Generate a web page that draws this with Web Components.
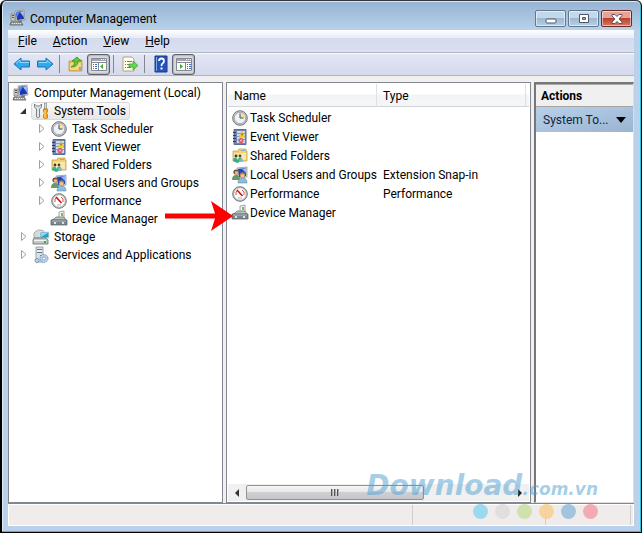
<!DOCTYPE html>
<html lang="en">
<head>
<meta charset="utf-8">
<title>Computer Management</title>
<style>
	body {
		margin: 0;
		font: 12px/18px Roboto, "Open Sans", sans-serif;
		color: #000;
	}
</style>
</head>
<body>
<mmc-window></mmc-window>

<script>
const icons = {
	computer: `
		<path d="M5 1l9-1 1 10-9 1z" fill="#d9d9d0" stroke="#8b8b85" stroke-width=".7"/>
		<path d="M6 2l7-1 1 8-7 1z" fill="#1739b5"/><path d="M6 2l4-.5L7 7z" fill="#5f85e8"/>
		<path d="M10 2l3-.7.8 6z" fill="#a9c6f7"/>
		<path d="M1 4h4v7H1z" fill="#c9c9c2" stroke="#777" stroke-width=".7"/><path d="M2 5.500h2M2 7.500h2" stroke="#555"/>
		<path d="M8 10h4v2H8z" fill="#888"/>
		<path d="M1 12h10l2 3H0z" fill="#a5aaa9" stroke="#555d5e" stroke-width=".8"/><path d="M2 13.500h9" stroke="#e8e8e8" stroke-dasharray="1 1"/>`,
	tools: `
		<path d="M1.500 1v3l2 2v8q1.500 2 3 0V6l2-2V1L6.500 3h-3z" fill="#e2e4e6" stroke="#71777b" stroke-width=".9"/>
		<path d="M11.500 0h2v6h-2z" fill="#ddd" stroke="#777" stroke-width=".6"/>
		<path d="M10.500 6h4v3l-1 1 1 2v3q-2 1-4 0v-3l1-2-1-1z" fill="#f2a51c" stroke="#b87008" stroke-width=".7"/><path d="M12 7v8" stroke="#ffdb74"/>`,
	clock: `
		<circle cx="8" cy="8" r="7.300" fill="#c3c5c7" stroke="#74777a"/>
		<circle cx="8" cy="8" r="5.600" fill="#eef3f9" stroke="#8b9096" stroke-width=".6"/>
		<path d="M8 8V2.700A5.300 5.300 0 0 1 13.300 8z" fill="#f8dca4"/>
		<path d="M8 3.500V8h3.500" fill="none" stroke="#3e5068"/>`,
	event: `
		<path d="M2 .5h12v15H2z" fill="#7187ae" stroke="#566d99"/><path d="M5 2h8v12H5z" fill="#c9dcf7"/>
		<path d="M5 4.500h8M5 7.500h8M5 10.500h8" stroke="#7fa0d8"/>
		<path d="M1 3.500h3M1 6.500h3M1 9.500h3M1 12.500h3" stroke="#333e54"/>
		<path d="M10 2.500L13 8H7z" fill="#ffd92e" stroke="#d0ac14" stroke-width=".6"/><path d="M10 4.500v2" stroke="#222" stroke-width=".8"/>
		<circle cx="9" cy="11.500" r="2.500" fill="#e0474b"/><path d="M8 10.500l2 2m0-2l-2 2" stroke="#fff" stroke-width=".8"/>`,
	folder: `
		<path d="M1 3h5l1-2h7v2h1v10H1z" fill="#f2d173" stroke="#c8a347" stroke-width=".8"/>
		<path d="M2 5h12v7H2z" fill="#f9e8ae"/><path d="M9 2.500h4" stroke="#6fb5e6"/>
		<circle cx="4" cy="8" r="1.400" fill="#4b352a"/><circle cx="8" cy="8" r="1.400" fill="#63412f"/>
		<path d="M1 13q0-3.500 3-3.500L6 12q0-2.500 2-2.500 2.500 0 2.500 3.500L5 15z" fill="#38b086"/><path d="M7 14q0-3.500 2-3.500 2 0 2 3z" fill="#78b9d5"/>`,
	users: `
		<path d="M5 1l10-1v10l-9 1z" fill="#d4d7d8" stroke="#8a8e91" stroke-width=".7"/><path d="M6 2l8-1v8l-7 1z" fill="#2145c1"/><path d="M10 2l4-1v5z" fill="#92b7ff"/>
		<circle cx="4" cy="5" r="2.600" fill="#70502e"/><circle cx="4.500" cy="5.800" r="1.800" fill="#e4b583"/>
		<path d="M0 13q0-5 4-5t4 5z" fill="#68976d"/>
		<circle cx="10.500" cy="8" r="2.700" fill="#b5833c"/><circle cx="10.500" cy="8.800" r="1.900" fill="#f0c697"/>
		<path d="M6 16q0-5 4.500-5t4.500 5z" fill="#8dbddb" stroke="#527d9b" stroke-width=".5"/>`,
	perf: `
		<circle cx="8" cy="8" r="7.300" fill="#c2c5c4" stroke="#747978"/><circle cx="8" cy="8" r="5.700" fill="#fff"/>
		<path d="M4 9V6l2-2M12 9V6l-2-2" fill="none" stroke="#d0524d"/>
		<path d="M5 4l5.500 6" stroke="#d61418" stroke-width="1.700"/><path d="M6 12h4" stroke="#aaa"/>`,
	device: `
		<path d="M8 1l5-1v8H8z" fill="#f5f6f4" stroke="#8a9190" stroke-width=".8"/><path d="M10 2h2v3h-2z" fill="#7ebb55"/>
		<path d="M3 8l2-2h8l2 3H1z" fill="#bcc2c4" stroke="#656d70" stroke-width=".7"/>
		<path d="M0 9h16v5H0z" fill="#7c878c" stroke="#515b60" stroke-width=".7"/><path d="M1 10h14" stroke="#b4bdc0"/>
		<path d="M3 11h2v2H3zm8 0h2v2h-2z" fill="#dfe3e1"/>`,
	storage: `
		<path d="M1 4q4-5 10-2l-1 7H1z" fill="#d5dadb" stroke="#8d9597" stroke-width=".7"/>
		<path d="M7 3h9v6H7z" fill="#299bcb" stroke="#d2e7ed"/><path d="M8 4h7L8 8z" fill="#8ed7ee"/>
		<path d="M1 9h12l2 2v4H0v-4z" fill="#c4c9ca" stroke="#606b6d" stroke-width=".8"/><path d="M1 11.500h12" stroke="#f3f5f5"/><path d="M11 12h2v2h-2z" fill="#2cb62d"/>`,
	services: `
		<path d="M3 0h7v15H3z" fill="#dce1e5" stroke="#889198" stroke-width=".8"/><path d="M4 2.500h5M4 5.500h5" stroke="#657785"/><path d="M4 4h5" stroke="#fff"/><path d="M7 8h2v1H7z" fill="#3eac50"/>
		<circle cx="11" cy="11.500" r="4" fill="#b9d0e6" stroke="#6e93b5" stroke-dasharray="1.500 1"/><circle cx="11" cy="11.500" r="1.500" fill="#fff" stroke="#6e93b5" stroke-width=".7"/>
		<circle cx="4" cy="13.500" r="2" fill="#c6d5e2" stroke="#7893aa"/>`,
	back: `<path d="M0 8l7-6v3h8.500v6H7v3z" fill="#31a9ec" stroke="#1875b5"/><path d="M2 7.500L6 4v2.500h9" fill="none" stroke="#8ad9ff"/>`,
	forward: `<path d="M16 8L9 2v3H.5v6H9v3z" fill="#31a9ec" stroke="#1875b5"/><path d="M1.500 6.500H10V4.500l3.500 3" fill="none" stroke="#8ad9ff"/>`,
	up: `
		<path d="M1 5h6l1-1h6v11H1z" fill="#e7bd5b" stroke="#b88d36" stroke-width=".7"/><path d="M2 7h11v7H2z" fill="#f4d681"/><path d="M11 11h2v3h-2z" fill="#75aad7"/>
		<path d="M3 11q4-1 4-6H4l5-4 4 4h-3q0 6-7 6z" fill="#62c934" stroke="#278a1b" stroke-width=".7"/>`,
	export: `
		<path d="M1 1h9l2 2v12H1z" fill="#fffceb" stroke="#b1a77d"/><path d="M3 5.500h1m1 0h5M3 8.500h1m1 0h5M3 11.500h1m1 0h4" stroke="#756f99"/>
		<path d="M7 8h4V5l5 4.500-5 4.500v-3H7z" fill="#6bd64b" stroke="#349f2d" stroke-width=".7"/>`,
	help: `
		<path d="M2 0h12v16H2z" fill="#2452ba" stroke="#193a8b"/><path d="M3 1h1v14H3z" fill="#7fa3ec"/>
		<path d="M6 5q0-2.500 2.500-2.500T11 5q0 1.500-1.500 2.500Q8.500 8 8.500 10" fill="none" stroke="#fff" stroke-width="1.800"/><path d="M7.500 11.500h2v2h-2z" fill="#fff"/>`,
	treepane: `
		<path d="M.5 2.500h15v12H.5z" fill="#fff" stroke="#858891"/><path d="M1 3h14v2H1z" fill="#a4a7b1"/><path d="M10 3.500h1m1 0h1m1 0h1" stroke="#fff"/><path d="M1 6.500h14" stroke="#858891"/>
		<path d="M7.500 7v7" stroke="#858891"/><path d="M2 8.500h1m1 0h2m-4 2h1m1 0h2m-4 2h1m1 0h2" stroke="#3e70b0"/><path d="M12 8v5l-3-2.500z" fill="#3cad32"/>`,
	actpane: `
		<path d="M.5 2.500h15v12H.5z" fill="#fff" stroke="#858891"/><path d="M1 3h14v2H1z" fill="#a4a7b1"/><path d="M10 3.500h1m1 0h1m1 0h1" stroke="#fff"/><path d="M1 6.500h14" stroke="#858891"/>
		<path d="M9.500 7v7" stroke="#858891"/><path d="M11 8.500h1m1 0h2m-4 2h1m1 0h2m-4 2h1m1 0h2" stroke="#3e70b0"/><path d="M4 8v5l3-2.500z" fill="#3cad32"/>`
};

class SysIcon extends HTMLElement {
	connectedCallback() {
		this.attachShadow({ mode: 'open' }).innerHTML = `
		<style>
			:host { display: block; flex: none; width: 16px; height: 16px; }
			svg { display: block; overflow: visible; }
		</style>
		<svg width="16" height="16" viewBox="0 0 16 16" aria-hidden="true">${icons[this.getAttribute('name')]}</svg>`;
	}
}

class TitleBar extends HTMLElement {
	connectedCallback() {
		this.attachShadow({ mode: 'open' }).innerHTML = `
		<style>
			:host { display: flex; height: 30px; gap: 4px; padding-left: 2px; box-sizing: border-box; }
			sys-icon { margin-top: 10px; }
			h1 { flex: 1; margin: 10px 0 0; font-size: 12px; font-weight: normal; line-height: 18px; }
			div { display: flex; gap: 2px; margin: 10px 2px 0 0; }
			button {
				width: 31px; height: 17px; padding: 0; display: grid; place-items: center;
				border: 1px solid #62788f; border-radius: 2px; box-shadow: inset 0 0 0 1px #ffffff88;
				background: linear-gradient(#c4d8eb 48%, #9db8d2 50%, #b8d0e8);
			}
			.close { border-color: #6a2927; background: linear-gradient(#e5a496 45%, #bd3e2b 50%, #d57b62); }
		</style>
		<sys-icon name="computer"></sys-icon>
		<h1><slot></slot></h1>
		<div>
			<button aria-label="Minimize"><svg width="12" height="10"><rect x="1" y="5" width="10" height="4" rx="1" fill="#fff" stroke="#535666"/></svg></button>
			<button aria-label="Maximize"><svg width="12" height="10"><path d="M1.500.5h9v8h-9zM4.500 3.500v2h3v-2z" fill="#fff" fill-rule="evenodd" stroke="#535666"/></svg></button>
			<button class="close" aria-label="Close"><svg width="12" height="10"><path d="M1 .5h3l2 2 2-2h3v1L8 5l3 3v1.500H8L6 7.500l-2 2H1V8l3-3-3-3z" fill="#fff" stroke="#535666"/></svg></button>
		</div>`;
	}
}

class MenuBar extends HTMLElement {
	connectedCallback() {
		const items = this.getAttribute('items').split(' ');
		this.attachShadow({ mode: 'open' }).innerHTML = `
		<style>
			:host {
				display: flex; gap: 16px; height: 22px; padding-left: 10px;
				background: linear-gradient(#fff, #e6ebf6 36%, #d4dbed 38%, #d9e0f2);
				border-bottom: 1px solid #b4b6c2;
			}
			button { border: 0; padding: 0; background: none; font: inherit; line-height: 22px; }
		</style>
		${items.map(item => `<button><u>${item[0]}</u>${item.slice(1)}</button>`).join('')}`;
	}
}

class ToolBar extends HTMLElement {
	connectedCallback() {
		this.attachShadow({ mode: 'open' }).innerHTML = `
		<style>
			:host {
				display: flex; align-items: center; height: 22px; padding-left: 2px;
				background: linear-gradient(#fff, #e1e5f4 8%, #d5d9ec);
				border-bottom: 1px solid #b1b2bc;
			}
			button {
				display: grid; place-items: center; width: 23px; height: 21px; padding: 0;
				border: 1px solid transparent; border-radius: 3px; background: none; box-sizing: border-box;
			}
			.on { border-color: #5f616b; background: #d8dbe4; box-shadow: inset 0 0 2px #666; }
			hr { width: 1px; height: 18px; margin: 0 4px 0 3px; border: 0; background: #86868e; }
		</style>
		<button aria-label="Back"><sys-icon name="back"></sys-icon></button>
		<button aria-label="Forward"><sys-icon name="forward"></sys-icon></button>
		<hr>
		<button aria-label="Up"><sys-icon name="up"></sys-icon></button>
		<button class="on" aria-label="Console tree"><sys-icon name="treepane"></sys-icon></button>
		<hr>
		<button aria-label="Export list"><sys-icon name="export"></sys-icon></button>
		<hr>
		<button aria-label="Help"><sys-icon name="help"></sys-icon></button>
		<button class="on" aria-label="Action pane"><sys-icon name="actpane"></sys-icon></button>`;
	}
}

class TreeItem extends HTMLElement {
	connectedCallback() {
		const state = this.getAttribute('state');
		const arrow = {
			open: '<path d="M7 3v6H1z" fill="#333"/>',
			closed: '<path d="M2.500 1.500v8L7 5.500z" fill="#fff" stroke="#a0a0a0"/>'
		}[state] || '';
		this.attachShadow({ mode: 'open' }).innerHTML = `
		<style>
			:host { display: flex; align-items: center; height: 18px; }
			:host([level="1"]) { padding-left: 8px; }
			:host([level="2"]) { padding-left: 26px; }
			:host([level="0"]) .arrow { display: none; }
			.arrow { flex: none; width: 12px; height: 12px; }
			button {
				display: flex; align-items: center; gap: 5px; height: 18px; padding: 0 3px 0 1px; box-sizing: border-box;
				border: 1px solid transparent; border-radius: 3px; background: none; font: inherit; white-space: nowrap;
			}
			:host([selected]) button { border-color: #d9d9d9; background: linear-gradient(#fafafa, #e6e6e6); }
		</style>
		<svg class="arrow" viewBox="0 0 12 12" aria-hidden="true">${arrow}</svg>
		<button><sys-icon name="${this.getAttribute('icon')}"></sys-icon><slot></slot></button>`;
	}
}

class ListView extends HTMLElement {
	connectedCallback() {
		const rows = [
			['clock', 'Task Scheduler', ''],
			['event', 'Event Viewer', ''],
			['folder', 'Shared Folders', ''],
			['users', 'Local Users and Groups', 'Extension Snap-in'],
			['perf', 'Performance', 'Performance'],
			['device', 'Device Manager', '']
		];
		this.attachShadow({ mode: 'open' }).innerHTML = `
		<style>
			:host { display: flex; flex-direction: column; justify-content: space-between; padding: 1px; }
			table { width: 100%; border-collapse: separate; border-spacing: 0; table-layout: fixed; }
			th {
				height: 23px; padding: 2px 6px 0; box-sizing: border-box; text-align: left; font-weight: normal;
				background: linear-gradient(#fff 45%, #f3f4f6 50%, #f5f6f8);
				border-bottom: 1px solid #d2d4d6; border-right: 1px solid #dfe0e2;
			}
			th:last-child { border-right: 0; width: 3px; padding: 0; }
			td { height: 19px; padding: 0 6px; white-space: nowrap; }
			tbody::before { content: ""; display: table-row; height: 1px; }
			td:first-child { padding: 0 0 0 4px; }
			.name { display: flex; align-items: center; gap: 2px; }
			td:last-child { padding: 0; }
		</style>
		<table>
			<thead><tr><th>Name</th><th>Type</th><th></th></tr></thead>
			<tbody>
			${rows.map(([icon, name, type]) => `
				<tr><td><div class="name"><sys-icon name="${icon}"></sys-icon>${name}</div></td><td>${type}</td><td></td></tr>`).join('')}
			</tbody>
		</table>
		<scroll-bar></scroll-bar>`;
	}
}

class ScrollBar extends HTMLElement {
	connectedCallback() {
		this.attachShadow({ mode: 'open' }).innerHTML = `
		<style>
			:host { display: grid; grid-template-columns: 18px 1fr 18px; height: 17px; background: #f0f0f0; }
			button { display: grid; place-items: center; border: 0; padding: 0; background: none; }
			.thumb {
				width: 67%; height: 15px; margin-top: 1px; box-sizing: border-box;
				border: 1px solid #929292; border-radius: 2px;
				background: linear-gradient(#f6f6f6, #e8e8ea 45%, #cfcfd4 50%, #c5c5ca);
			}
		</style>
		<button aria-label="Scroll left"><svg width="8" height="8"><path d="M6 0v8L2 4z" fill="#333"/></svg></button>
		<div><button class="thumb" aria-label="Scroll thumb"><svg width="9" height="7"><path d="M1.500 0v7M4.500 0v7M7.500 0v7" stroke="#555"/><path d="M2.500 0v7M5.500 0v7M8.500 0v7" stroke="#aaa"/></svg></button></div>
		<button aria-label="Scroll right"><svg width="8" height="8"><path d="M2 0v8l4-4z" fill="#222"/></svg></button>`;
	}
}

class ActionPane extends HTMLElement {
	connectedCallback() {
		this.attachShadow({ mode: 'open' }).innerHTML = `
		<style>
			:host { display: block; }
			h2 {
				margin: 0; height: 20px; padding: 1px 5px 0; font-size: 12px; line-height: 20px;
				background: #f0f0f0; border-top: 1px solid #aaa; border-bottom: 1px solid #a5a5a5;
			}
			button {
				display: flex; align-items: center; justify-content: space-between; width: 100%; height: 25px;
				padding: 0 7px; border: 0; font: inherit; color: #14233c; white-space: nowrap;
				background: linear-gradient(165deg, #b9d1ea, #99b4d1);
			}
		</style>
		<h2>Actions</h2>
		<button><span><slot></slot></span><svg width="10" height="6" aria-hidden="true"><path d="M0 0h10L5 6z"/></svg></button>`;
	}
}

class StatusBar extends HTMLElement {
	connectedCallback() {
		this.attachShadow({ mode: 'open' }).innerHTML = `
		<style>
			:host {
				display: grid; grid-template-columns: 1fr 133px 85px 2px; height: 20px;
				background: #f0eceb; border: 1px solid #fff;
			}
			span { border-right: 1px solid #d2cecd; }
			span:last-child { border: 0; }
		</style>
		<span></span><span></span><span></span><span></span>`;
	}
}

class SiteMark extends HTMLElement {
	connectedCallback() {
		const dots = ['#8fd5f0', '#dfdadd', '#c9dfa5', '#f8d08f', '#94bddc', '#f2a0a6'];
		this.attachShadow({ mode: 'open' }).innerHTML = `
		<style>
			:host {
				display: flex; flex-direction: column; align-items: flex-end; pointer-events: none;
				font: italic bold 28px/30px "DejaVu Sans", sans-serif; color: #4da0d080;
			}
			small { font-size: 17px; }
			div { display: flex; gap: 7px; }
			i { width: 15px; height: 15px; border-radius: 50%; opacity: .85; }
		</style>
		<span>Download<small>.com.vn</small></span>
		<div>${dots.map(c => `<i style="background: ${c}"></i>`).join('')}</div>`;
	}
}

class MmcWindow extends HTMLElement {
	connectedCallback() {
		this.attachShadow({ mode: 'open' }).innerHTML = `
		<style>
			:host {
				position: relative; display: flex; flex-direction: column; height: 100vh; box-sizing: border-box;
				padding: 0 7px 6px 6px; background: linear-gradient(#95b2d1, #b9d1ea 30px);
				border: solid #000; border-width: 0 1px 1px 2px; border-radius: 6px 6px 0 0;
				box-shadow: inset 0 1px #33363d, inset 0 2px #d9e9f8, inset -1px -1px #2bc0dc, inset 1px 0 #dceaf8;
			}
			main {
				flex: 1; min-height: 0; display: grid; grid-template-columns: 215px 1fr 100px; gap: 3px;
				padding-top: 6px; background: #f0f0f0; border-bottom: 1px solid #85868c;
			}
			nav, list-view, action-pane { background: #fff; border: 1px solid #828790; min-width: 0; }
			nav { padding: 1px 2px; }
			action-pane { border-width: 2px 1px 1px 2px; border-color: #777 #dedede #dedede #777; }
			site-mark { position: absolute; right: 43px; bottom: 13px; }
			.pointer { position: absolute; left: 163px; top: 201px; }
		</style>
		<title-bar>Computer Management</title-bar>
		<menu-bar items="File Action View Help"></menu-bar>
		<tool-bar></tool-bar>
		<main>
			<nav>
				<tree-item level="0" icon="computer">Computer Management (Local)</tree-item>
				<tree-item level="1" icon="tools" state="open" selected>System Tools</tree-item>
				<tree-item level="2" icon="clock" state="closed">Task Scheduler</tree-item>
				<tree-item level="2" icon="event" state="closed">Event Viewer</tree-item>
				<tree-item level="2" icon="folder" state="closed">Shared Folders</tree-item>
				<tree-item level="2" icon="users" state="closed">Local Users and Groups</tree-item>
				<tree-item level="2" icon="perf" state="closed">Performance</tree-item>
				<tree-item level="2" icon="device">Device Manager</tree-item>
				<tree-item level="1" icon="storage" state="closed">Storage</tree-item>
				<tree-item level="1" icon="services" state="closed">Services and Applications</tree-item>
			</nav>
			<list-view></list-view>
			<action-pane>System To...</action-pane>
		</main>
		<status-bar></status-bar>
		<svg class="pointer" width="69" height="30" aria-hidden="true"><path d="M0 12.500h50L46 0l22 15-22 15 4-12.500H0z" fill="#f00"/></svg>
		<site-mark></site-mark>`;
	}
}

customElements.define('sys-icon', SysIcon);
customElements.define('title-bar', TitleBar);
customElements.define('menu-bar', MenuBar);
customElements.define('tool-bar', ToolBar);
customElements.define('tree-item', TreeItem);
customElements.define('scroll-bar', ScrollBar);
customElements.define('list-view', ListView);
customElements.define('action-pane', ActionPane);
customElements.define('status-bar', StatusBar);
customElements.define('site-mark', SiteMark);
customElements.define('mmc-window', MmcWindow);
</script>
</body>
</html>
